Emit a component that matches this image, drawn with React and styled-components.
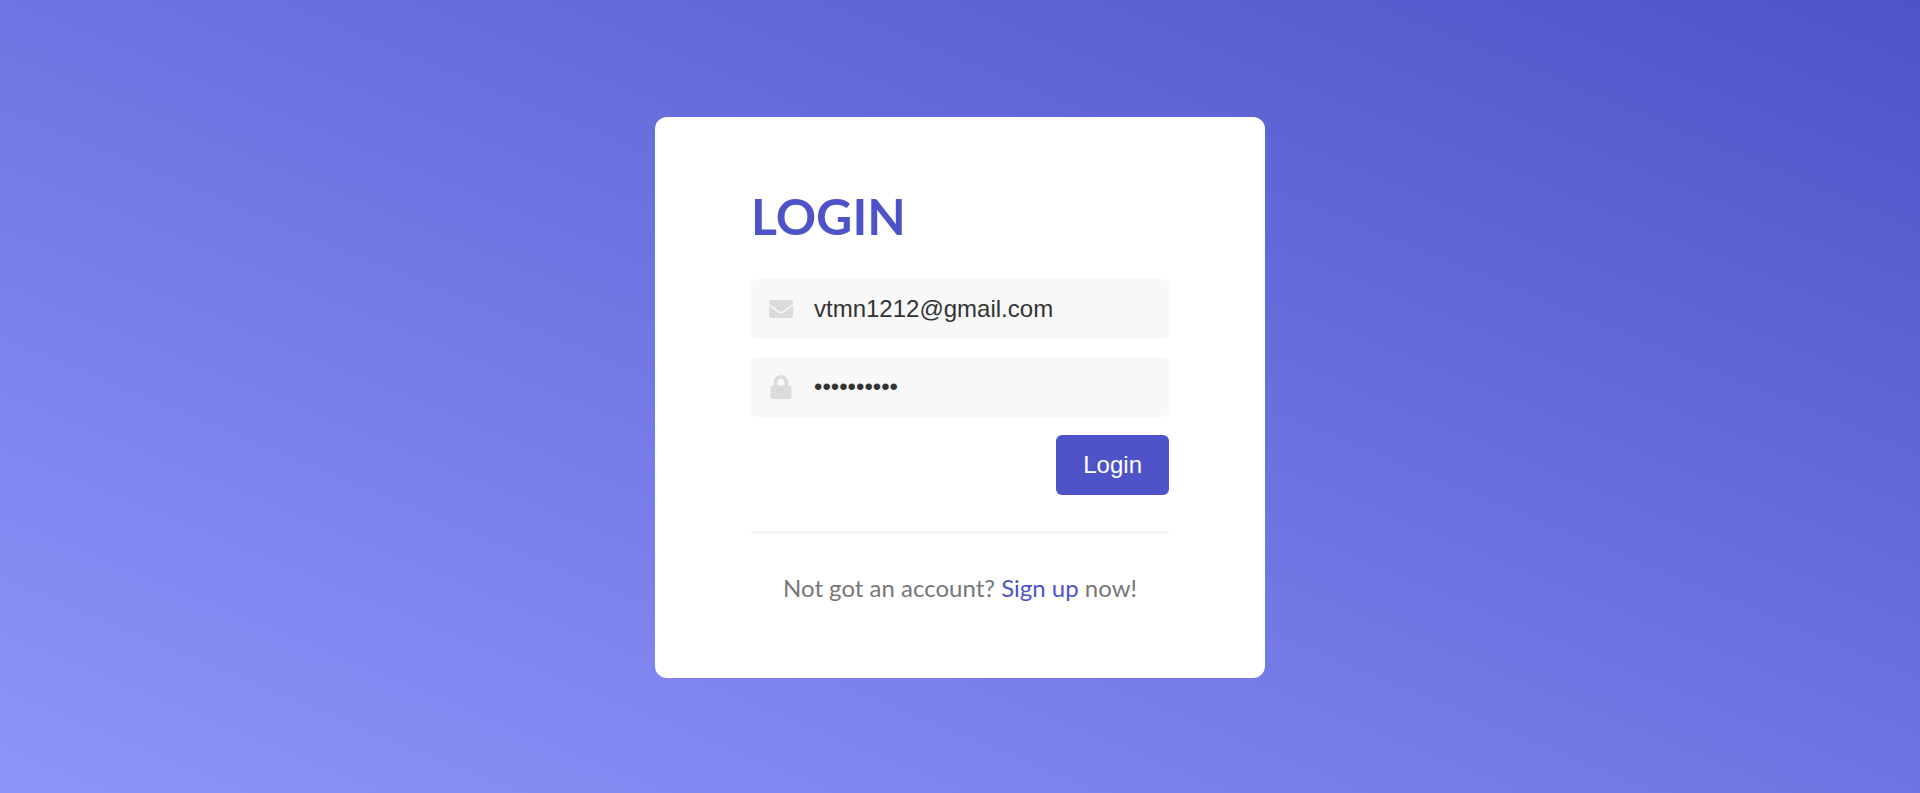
import React from "react";
import styled, { createGlobalStyle } from "styled-components";
import { FaEnvelope, FaLock } from "react-icons/fa";

const GlobalStyle = createGlobalStyle`
  *, *::before, *::after { box-sizing: border-box; }
  body { margin: 0; }
`;

const Page = styled.main`
  min-height: 100vh;
  display: flex;
  align-items: center;
  justify-content: center;
  padding: 26px 24px 24px;
  background: linear-gradient(to top right, #8f94fb, #4e54c8);
  font-family: Lato, sans-serif;
`;

const Card = styled.section`
  width: 100%;
  max-width: 610px;
  padding: 72px 96px;
  background: #fff;
  border-radius: 12px;
`;

const Title = styled.h1`
  margin: 0 0 36px;
  color: #4e54c8;
  font-size: 50px;
  font-weight: 700;
  line-height: 54px;
`;

const Form = styled.form`
  display: flex;
  flex-direction: column;
  gap: 18px;
`;

const Field = styled.label`
  display: flex;
  align-items: center;
  gap: 21px;
  height: 60px;
  padding: 0 18px;
  border-radius: 6px;
  background: #f8f8f8;
  color: #dbdbdb;
`;

const IconSlot = styled.span`
  display: flex;
  justify-content: center;
  flex: none;
  width: 24px;
  font-size: 24px;
`;

const Input = styled.input`
  flex: 1;
  min-width: 0;
  height: 100%;
  padding: 0;
  border: 0;
  outline: 0;
  background: transparent;
  color: #333;
  font-family: "Liberation Sans", Arial, sans-serif;
  font-size: 24px;
`;

const SubmitButton = styled.button`
  align-self: flex-end;
  height: 60px;
  padding: 0 27px;
  border: 0;
  border-radius: 6px;
  background: #4e54c8;
  color: #fff;
  font-family: "Liberation Sans", Arial, sans-serif;
  font-size: 24px;
  cursor: pointer;
`;

const Divider = styled.hr`
  height: 3px;
  margin: 36px 0;
  border: 0;
  background: #f5f5f5;
`;

const Prompt = styled.p`
  margin: 0;
  color: #777;
  font-size: 24px;
  line-height: 36px;
  text-align: center;
`;

const PromptLink = styled.a`
  color: #4e54c8;
  text-decoration: none;
`;

export default function App() {
  return (
    <>
      <GlobalStyle />
      <Page>
        <Card>
          <Title>LOGIN</Title>
          <Form onSubmit={(event) => event.preventDefault()}>
            <Field>
              <IconSlot><FaEnvelope aria-hidden="true" /></IconSlot>
              <Input type="email" aria-label="Email" defaultValue="vtmn1212@gmail.com" />
            </Field>
            <Field>
              <IconSlot><FaLock aria-hidden="true" /></IconSlot>
              <Input type="password" aria-label="Password" defaultValue="abcdefghij" />
            </Field>
            <SubmitButton type="submit">Login</SubmitButton>
          </Form>
          <Divider />
          <Prompt>
            Not got an account? <PromptLink href="#signup">Sign up</PromptLink> now!
          </Prompt>
        </Card>
      </Page>
    </>
  );
}
